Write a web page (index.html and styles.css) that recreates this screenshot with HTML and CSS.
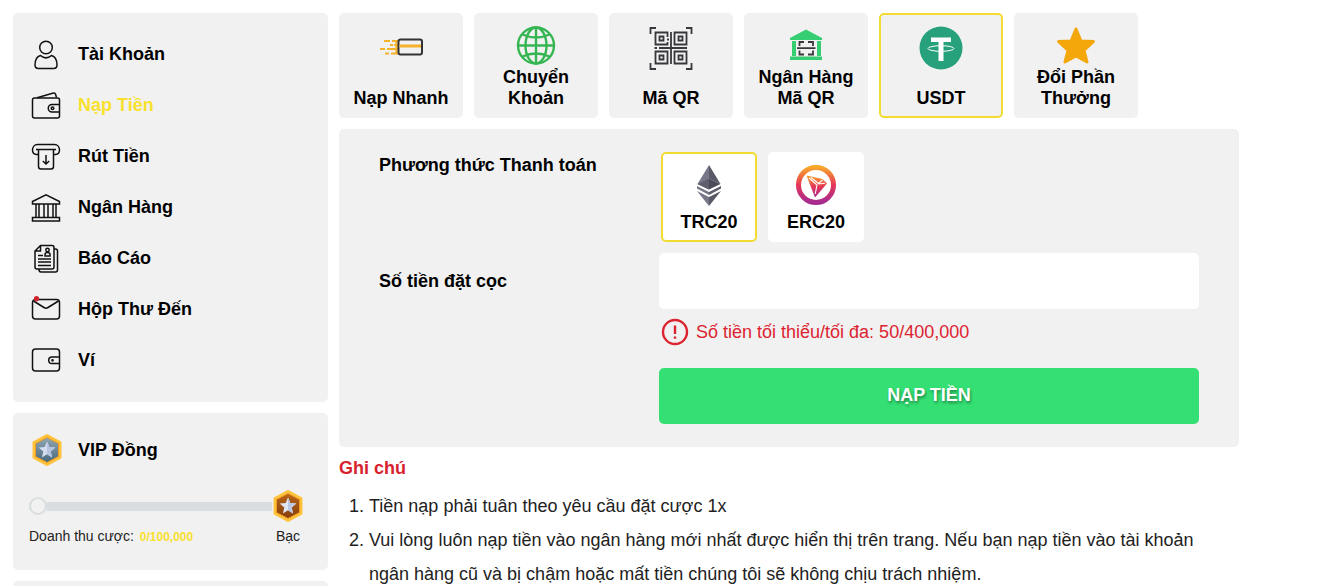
FILE: index.html
```html
<!DOCTYPE html>
<html lang="vi">
<head>
  <meta charset="UTF-8">
  <meta name="viewport" content="width=device-width, initial-scale=1.0">
  <title>Nạp Tiền</title>
  <link rel="stylesheet" href="styles.css">
</head>
<body>
  <div class="page">
    <aside class="sidebar">
      <nav class="card menu">
        <a href="#" class="menu-item">
          <svg class="menu-icon" viewBox="0 0 30 30"><circle cx="15" cy="7.500" r="6.300"/><path d="M9.500 15.500C6 16.500 4 20 4 25q0 3.500 3.500 3.500h15q3.500 0 3.500-3.500c0-5-2-8.500-5.500-9.500-3.500 3-7.500 3-11 0z"/></svg>
          <span>Tài Khoản</span>
        </a>
        <a href="#" class="menu-item active">
          <svg class="menu-icon" viewBox="0 0 30 30"><rect x="1.500" y="7" width="27" height="20" rx="2"/><path d="M6 6.800 22.500 2q1.500-.3 2 1L25.500 6.500M28.500 13.500H21a3.700 3.700 0 0 0 0 7.500h7.500"/><circle cx="21.500" cy="17.200" r="1.300"/></svg>
          <span>Nạp Tiền</span>
        </a>
        <a href="#" class="menu-item">
          <svg class="menu-icon" viewBox="0 0 30 30"><path d="M7 12.500H5.500a4.500 4.500 0 0 1-4-4.500C1.500 5 3.500 2.500 6.500 2.500h17c3 0 5 2.500 5 5.500a4.500 4.500 0 0 1-4 4.500H23M5 7.500h20"/><path d="M7.500 8v16.500q0 2.500 2.500 2.500h10q2.500 0 2.500-2.500V8M15 13v9M11.800 19l3.200 3 3.200-3"/></svg>
          <span>Rút Tiền</span>
        </a>
        <a href="#" class="menu-item">
          <svg class="menu-icon" viewBox="0 0 30 30"><path d="M1.500 8.500 15 1.800 28.500 8.500v2.500h-27zM1.500 24.500h27V28h-27zM5 11v13.500M8 11v13.500M13 11v13.500M17 11v13.500M22 11v13.500M25 11v13.500"/></svg>
          <span>Ngân Hàng</span>
        </a>
        <a href="#" class="menu-item">
          <svg class="menu-icon" viewBox="0 0 30 30"><path d="M9.500 1.500H21q2 0 2 2V23q0 2-2 2H6q-2 0-2-2V7zM9.500 1.500V7H4M23 5h1.500q2 0 2 2v19q0 2-2 2H10q-2 0-2-2.500M7 11.500h5M7 15h13M7 18h13M7 21.500h13M14 12v-1.500q0-2 2.500-2t2.500 2V12z"/><circle cx="16.500" cy="6" r="1.700"/></svg>
          <span>Báo Cáo</span>
        </a>
        <a href="#" class="menu-item">
          <svg class="menu-icon" viewBox="0 0 30 30"><rect x="1.500" y="4.500" width="27" height="19.500" rx="3"/><path d="M2.500 6 13 12.500q2 1.300 4 0L27.500 6"/><circle class="dot" cx="5.500" cy="3.700" r="2.600"/></svg>
          <span>Hộp Thư Đến</span>
        </a>
        <a href="#" class="menu-item">
          <svg class="menu-icon" viewBox="0 0 30 30"><rect x="1.500" y="3" width="27" height="22" rx="3"/><path d="M28.500 11H21a3.300 3.300 0 0 0 0 6.600h7.500"/><circle cx="21.500" cy="14.300" r=".6"/></svg>
          <span>Ví</span>
        </a>
      </nav>

      <section class="card vip">
        <div class="vip-title">
          <svg class="badge" viewBox="0 0 32 34">
            <defs><linearGradient id="silver" x1="0" y1="0" x2="0" y2="1"><stop offset="0" stop-color="#92a7b2"/><stop offset="1" stop-color="#48697e"/></linearGradient></defs>
            <path d="M16 2.500 29 9.500v15L16 31.500 3 24.500v-15z" fill="#ffc23c" stroke="#ffc23c" stroke-width="3" stroke-linejoin="round"/>
            <path d="M16 4.500 27.500 10.500v13L16 29.500 4.500 23.500v-13z" fill="url(#silver)" stroke="#f09a20"/>
            <path d="m16 8.500 2.300 5.600 6 .5-4.600 3.900 1.400 5.900-5.100-3.200-5.100 3.200 1.400-5.900-4.600-3.900 6-.5z" fill="#d3dcf0"/>
            <path d="M16 8.500v12.700l5.100 3.200-1.400-5.900 4.600-3.900-6-.5z" fill="#b7c4df"/>
          </svg>
          <span>VIP Đồng</span>
        </div>
        <div class="progress">
          <span class="progress-start"></span>
          <span class="progress-track"></span>
          <svg class="badge" viewBox="0 0 32 34">
            <defs><linearGradient id="bronze" x1="0" y1="0" x2="0" y2="1"><stop offset="0" stop-color="#b96618"/><stop offset="1" stop-color="#853d0b"/></linearGradient></defs>
            <path d="M16 2.500 29 9.500v15L16 31.500 3 24.500v-15z" fill="#ffc23c" stroke="#ffc23c" stroke-width="3" stroke-linejoin="round"/>
            <path d="M16 4.500 27.500 10.500v13L16 29.500 4.500 23.500v-13z" fill="url(#bronze)" stroke="#f09a20"/>
            <path d="m16 8.500 2.300 5.600 6 .5-4.600 3.900 1.400 5.900-5.100-3.200-5.100 3.200 1.400-5.900-4.600-3.900 6-.5z" fill="#e0e5f5"/>
            <path d="M16 8.500v12.700l5.100 3.200-1.400-5.900 4.600-3.900-6-.5z" fill="#bcc7e2"/>
          </svg>
        </div>
        <div class="vip-info">
          <span>Doanh thu cược: <b class="turnover">0/100,000</b></span>
          <span>Bạc</span>
        </div>
      </section>

      <section class="card extra"></section>
    </aside>

    <main class="content">
      <div class="tabs">
        <button type="button" class="tab">
          <svg class="tab-icon" viewBox="0 0 44 44" fill="none">
            <path d="M5 15h6m2 0h6M11 19h3m1 0h4M1 23h5m2 0h11M6 27.500h4m2 0h7M17.500 14v14" stroke="#f5b32b" stroke-width="2.200"/>
            <rect x="19.500" y="13.500" width="23.500" height="15" rx="2" stroke="#333" stroke-width="2"/>
            <path d="M20.500 20H42" stroke="#f5b32b" stroke-width="3"/>
          </svg>
          <span>Nạp Nhanh</span>
        </button>
        <button type="button" class="tab">
          <svg class="tab-icon" viewBox="0 0 44 44" fill="none" stroke="#35b653" stroke-width="2.400">
            <circle cx="22" cy="19.500" r="18"/><ellipse cx="22" cy="19.500" rx="10.500" ry="18"/><path d="M22 1.500v36M4 19.500h36M8.500 8.500q13.500 6 27 0M8.500 30.500q13.500-6 27 0"/>
          </svg>
          <span>Chuyển Khoản</span>
        </button>
        <button type="button" class="tab">
          <svg class="tab-icon" viewBox="0 0 44 44" fill="none" stroke="#38383c" stroke-width="1.800">
            <path d="M1.500 8V2H7M37 2h5.500v6M42.500 37v6H37M7 43H1.500v-6"/>
            <path d="M18.500 11V6.500h-12v12h12V16M25.500 6.500h12v12h-12zM6.500 25.500h12v12h-12zM25.500 25.500h12v12h-12z"/>
            <path d="M10.500 10.500h4v4h-4zM29.500 10.500h4v4h-4zM10.500 29.500h4v4h-4zM29.500 29.500h4v4h-4z"/>
            <path d="M22 6v32M10 22h28M5.500 22h2.500M18 13.500h2"/>
          </svg>
          <span>Mã QR</span>
        </button>
        <button type="button" class="tab">
          <svg class="tab-icon" viewBox="0 0 44 44" fill="#36ce73">
            <path d="M22 3.500 38 12v2H6v-2zM8 15h4v15H8zM33 15h4v15h-4zM6 30.500h32V34H6z"/>
            <path d="M15.500 20v-4H20M24 16h5v4M29 24.500v4h-5M20 28.500h-4.500v-4M13 22.200h18.500" fill="none" stroke="#38383c" stroke-width="1.800"/>
          </svg>
          <span>Ngân Hàng Mã QR</span>
        </button>
        <button type="button" class="tab selected">
          <svg class="tab-icon" viewBox="0 0 44 44">
            <circle cx="22" cy="22" r="21.500" fill="#26a17b"/>
            <path d="M12 11.500h20V16h-7.500v19h-5V16H12z" fill="#fff"/>
            <ellipse cx="22" cy="22.500" rx="13" ry="2.800" fill="none" stroke="#fff" stroke-width="1"/>
          </svg>
          <span>USDT</span>
        </button>
        <button type="button" class="tab">
          <svg class="tab-icon" viewBox="0 0 44 44">
            <path d="m22 3 5 12 12.500.5-9.500 9 3 11.500-11-6-11 6 3-11.500-9.500-9L17 15z" fill="#f4a70a" stroke="#f4a70a" stroke-width="3" stroke-linejoin="round"/>
          </svg>
          <span>Đổi Phần Thưởng</span>
        </button>
      </div>

      <form class="card deposit-form">
        <span class="form-label" id="method-label">Phương thức Thanh toán</span>
        <div class="methods" role="group" aria-labelledby="method-label">
          <button type="button" class="method selected">
            <svg class="method-icon" viewBox="0 0 42 42">
              <path d="M21 1 9.500 20 21 14.500z" fill="#77778a"/><path d="m21 1 11.500 19L21 14.500z" fill="#5a5968"/>
              <path d="M9.500 20 21 14.500 32.500 20 21 25.500z" fill="#4c4b59"/><path d="M9.500 20 21 14.500v11z" fill="#5f5f6e"/>
              <path d="M9 22 21 28v3L9 24.500zM9 27l12 6v9z" fill="#77778a"/><path d="m33 22-12 6v3l12-6.500zM33 27l-12 6v9z" fill="#5a5968"/>
            </svg>
            <span>TRC20</span>
          </button>
          <button type="button" class="method">
            <svg class="method-icon" viewBox="0 0 42 42">
              <defs><linearGradient id="tron" x1="0" y1="0" x2="0" y2="1"><stop offset="0" stop-color="#f8a52a"/><stop offset=".5" stop-color="#e53758"/><stop offset="1" stop-color="#a52b91"/></linearGradient></defs>
              <circle cx="21" cy="21" r="17.500" fill="none" stroke="url(#tron)" stroke-width="5"/>
              <path d="m11.500 11.500 16 3.500 4.500 4.500L20 33.500z" fill="url(#tron)"/>
              <path d="m14 14 8 7-1.800 9M16 13.500l7.500 6 4-3.500M23.500 20l6.500-.8" fill="none" stroke="#fff" stroke-width="1.100"/>
            </svg>
            <span>ERC20</span>
          </button>
        </div>

        <label class="form-label" for="amount">Số tiền đặt cọc</label>
        <div class="amount-field">
          <input type="text" id="amount" name="amount" inputmode="numeric">
          <p class="limit">
            <svg class="limit-icon" viewBox="0 0 28 28"><circle cx="14" cy="14" r="12" fill="none" stroke="#dc2430" stroke-width="2.400"/><path d="M14 7.500v8.500M14 18.500v2.300" stroke="#dc2430" stroke-width="2.400"/></svg>
            <span>Số tiền tối thiểu/tối đa: 50/400,000</span>
          </p>
          <button type="submit" class="submit-btn">NẠP TIỀN</button>
        </div>
      </form>

      <section class="notes">
        <h2>Ghi chú</h2>
        <ol>
          <li>Tiền nạp phải tuân theo yêu cầu đặt cược 1x</li>
          <li>Vui lòng luôn nạp tiền vào ngân hàng mới nhất được hiển thị trên trang. Nếu bạn nạp tiền vào tài khoản ngân hàng cũ và bị chậm hoặc mất tiền chúng tôi sẽ không chịu trách nhiệm.</li>
        </ol>
      </section>
    </main>
  </div>
</body>
</html>
```

FILE: styles.css
```css
* {
  box-sizing: border-box;
}

body {
  margin: 0;
  background-color: #fff;
  color: #000;
  font-family: Arial, "Liberation Sans", sans-serif;
  font-size: 18px;
}

button, input {
  font-family: inherit;
  font-size: inherit;
}

.page {
  display: flex;
  gap: 11px;
  padding: 13px;
}

.sidebar {
  display: flex;
  flex-direction: column;
  flex: 0 0 315px;
  gap: 11px;
}

.card {
  background-color: #f1f1f1;
  border-radius: 5px;
}

/* Menu */
.menu {
  padding: 16px;
}

.menu-item {
  display: flex;
  align-items: center;
  gap: 17px;
  height: 51px;
  padding-left: 2px;
  color: #000;
  font-weight: bold;
  text-decoration: none;
}

.menu-item.active {
  color: #f8e02e;
}

.menu-icon {
  width: 30px;
  height: 30px;
  fill: none;
  stroke: #111;
  stroke-width: 1.5;
}

.menu-icon .dot {
  fill: #d0212e;
  stroke: none;
}

/* VIP */
.vip {
  padding: 20px 24px 24px 16px;
}

.vip-title {
  display: flex;
  align-items: center;
  gap: 15px;
  padding-left: 2px;
  font-weight: bold;
}

.badge {
  flex: none;
  width: 32px;
  height: 34px;
}

.progress {
  display: flex;
  align-items: center;
  margin-top: 22px;
}

.progress-start {
  width: 18px;
  height: 18px;
  border: 2px solid #d9dddf;
  border-radius: 50%;
}

.progress-track {
  flex: 1;
  height: 9px;
  background-color: #d9dddf;
}

.vip-info {
  display: flex;
  justify-content: space-between;
  padding-right: 4px;
  margin-top: 4px;
  color: #222;
  font-size: 14px;
  line-height: 18px;
}

.turnover {
  margin-left: 2px;
  color: #f8e02e;
  font-family: Impact, "Liberation Sans", sans-serif;
  font-size: 12px;
}

.extra {
  height: 60px;
}

/* Content */
.content {
  flex: 1;
  max-width: 900px;
}

.tabs {
  display: flex;
  gap: 11px;
}

.tab {
  display: flex;
  flex-direction: column;
  align-items: center;
  justify-content: space-between;
  width: 124px;
  height: 105px;
  padding: 11px 8px 7px;
  border: 2px solid #f1f1f1;
  border-radius: 5px;
  background-color: #f1f1f1;
  color: #000;
  font-weight: bold;
  line-height: 21px;
  cursor: pointer;
}

.tab-icon {
  flex: none;
  width: 44px;
  height: 44px;
}

.tab span {
  margin-top: -8px;
}

.deposit-form {
  display: grid;
  grid-template-columns: 280px 1fr;
  row-gap: 11px;
  margin-top: 11px;
  padding: 23px 40px;
}

.form-label {
  font-weight: bold;
  line-height: 26px;
}

label.form-label {
  margin-top: 15px;
}

.methods {
  display: flex;
  gap: 11px;
  padding-left: 2px;
}

.method {
  display: flex;
  flex-direction: column;
  align-items: center;
  width: 96px;
  height: 90px;
  padding: 10px 0 8px;
  border: 2px solid #fff;
  border-radius: 5px;
  background-color: #fff;
  color: #000;
  font-weight: bold;
  line-height: 32px;
  cursor: pointer;
}

.method-icon {
  flex: none;
  width: 42px;
  height: 42px;
}

.selected {
  border-color: #f3dc32;
}

.amount-field input {
  display: block;
  width: 100%;
  height: 56px;
  padding: 0 16px;
  border: none;
  border-radius: 5px;
  background-color: #fff;
}

.limit {
  display: flex;
  align-items: center;
  gap: 7px;
  margin: 9px 0 22px;
  padding-left: 2px;
  color: #dc2430;
}

.limit-icon {
  width: 28px;
  height: 28px;
}

.submit-btn {
  width: 100%;
  height: 56px;
  padding: 0 0 2px;
  border: none;
  border-radius: 5px;
  background-color: #34e073;
  color: #fff;
  font-weight: bold;
  text-shadow: 1px 2px 3px rgba(0, 0, 0, 0.4);
  cursor: pointer;
}

.submit-btn:hover {
  background-color: #2bcb66;
}

/* Notes */
.notes {
  padding-right: 24px;
}

.notes h2 {
  margin: 9px 0;
  color: #d8232f;
  font-size: 18px;
  line-height: 24px;
}

.notes ol {
  margin: 0;
  padding-left: 30px;
  color: #222;
  line-height: 34px;
}
```
